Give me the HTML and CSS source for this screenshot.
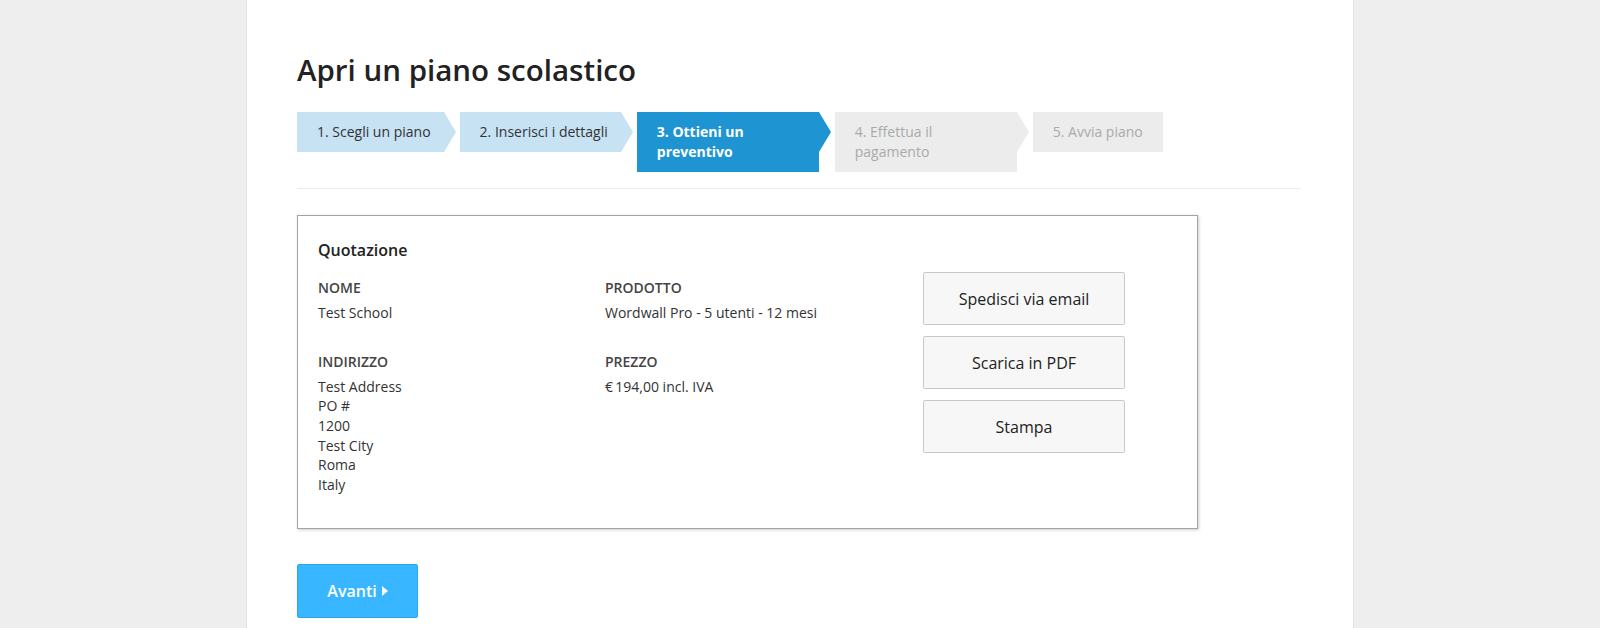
FILE: index.html
```html
<!DOCTYPE html>
<html lang="it">
<head>
  <meta charset="UTF-8">
  <meta name="viewport" content="width=device-width, initial-scale=1.0">
  <title>Apri un piano scolastico</title>
  <link rel="stylesheet" href="styles.css">
</head>
<body>
  <div class="page">
    <h1>Apri un piano scolastico</h1>

    <div class="steps">
      <div class="step done">1. Scegli un piano</div>
      <div class="step done">2. Inserisci i dettagli</div>
      <div class="step current">3. Ottieni un preventivo</div>
      <div class="step todo">4. Effettua il pagamento</div>
      <div class="step todo last">5. Avvia piano</div>
    </div>

    <hr class="divider">

    <div class="quote">
      <h3>Quotazione</h3>
      <div class="quote-grid">
        <div class="col">
          <div class="field">
            <div class="label">NOME</div>
            <div class="value">Test School</div>
          </div>
          <div class="field">
            <div class="label">INDIRIZZO</div>
            <div class="value">Test Address<br>PO #<br>1200<br>Test City<br>Roma<br>Italy</div>
          </div>
        </div>
        <div class="col">
          <div class="field">
            <div class="label">PRODOTTO</div>
            <div class="value">Wordwall Pro - 5 utenti - 12 mesi</div>
          </div>
          <div class="field">
            <div class="label">PREZZO</div>
            <div class="value">€&#8201;194,00 incl. IVA</div>
          </div>
        </div>
        <div class="actions">
          <button class="btn">Spedisci via email</button>
          <button class="btn">Scarica in PDF</button>
          <button class="btn">Stampa</button>
        </div>
      </div>
    </div>

    <button class="next">Avanti
      <svg width="6" height="10" viewBox="0 0 6 10"><path d="M0 0 L6 5 L0 10 Z" fill="#fff"/></svg>
    </button>
  </div>
</body>
</html>
```

FILE: styles.css
```css
body {
  margin: 0;
  background-color: #eeeeee;
  font-family: "Open Sans", "Liberation Sans", sans-serif;
  color: #333;
}
.page {
  width: 1108px;
  min-height: 100vh;
  margin: 0 auto;
  box-sizing: border-box;
  padding: 52px 52px 0 50px;
  background-color: #fff;
  border-left: 1px solid #e3e3e3;
  border-right: 1px solid #e3e3e3;
}
h1 {
  margin: 0 0 24px;
  font-size: 29.5px;
  font-weight: 600;
  line-height: 36px;
  color: #222;
}
.steps {
  display: flex;
  align-items: flex-start;
  gap: 16px;
}
.step {
  position: relative;
  box-sizing: border-box;
  max-width: 182px;
  padding: 10px 13px 10px 20px;
  font-size: 14px;
  line-height: 20px;
}
.step::after {
  content: '';
  position: absolute;
  left: 100%;
  top: 0;
  border-left: 12px solid transparent;
  border-top: 20px solid transparent;
  border-bottom: 20px solid transparent;
}
.step.done {
  background-color: #c6e2f3;
  color: #333;
}
.step.done::after {
  border-left-color: #c6e2f3;
}
.step.current {
  background-color: #1e94d3;
  color: #fff;
  font-weight: 700;
}
.step.current::after {
  border-left-color: #1e94d3;
}
.step.todo {
  background-color: #ececec;
  color: #aaa;
}
.step.todo::after {
  border-left-color: #ececec;
}
.step.last {
  padding-right: 20px;
}
.step.last::after {
  display: none;
}
.divider {
  margin: 16px 0 26px;
  border: 0;
  border-top: 1px solid #ececec;
}
.quote {
  width: 901px;
  box-sizing: border-box;
  padding: 23px 20px 34px;
  border: 1px solid #a3a3a3;
  box-shadow: 1px 1px 3px rgba(0, 0, 0, 0.2);
}
.quote h3 {
  margin: 0 0 17px;
  font-size: 16px;
  font-weight: 600;
  line-height: 22px;
  color: #222;
}
.quote-grid {
  display: grid;
  grid-template-columns: 287px 318px 202px;
  align-items: start;
}
.field {
  margin-bottom: 30px;
  font-size: 14px;
  line-height: 19.6px;
}
.field:last-child {
  margin-bottom: 0;
}
.label {
  margin-bottom: 5px;
  font-weight: 600;
  color: #444;
}
.value {
  color: #333;
}
.actions {
  display: flex;
  flex-direction: column;
  gap: 11px;
  margin-top: -6px;
}
.btn {
  width: 202px;
  height: 53px;
  padding: 0;
  border: 1px solid #c8c8c8;
  border-radius: 2px;
  background-color: #f7f7f7;
  font-family: "Open Sans", "Liberation Sans", sans-serif;
  font-size: 16px;
  color: #222;
  cursor: pointer;
}
.next {
  display: flex;
  align-items: center;
  justify-content: center;
  gap: 5px;
  width: 121px;
  height: 54px;
  margin-top: 35px;
  padding: 0;
  border: 1px solid #2aa7ef;
  border-radius: 2px;
  background-color: #38b6ff;
  color: #fff;
  font-family: "Open Sans", "Liberation Sans", sans-serif;
  font-size: 16px;
  font-weight: 600;
  cursor: pointer;
}
```
